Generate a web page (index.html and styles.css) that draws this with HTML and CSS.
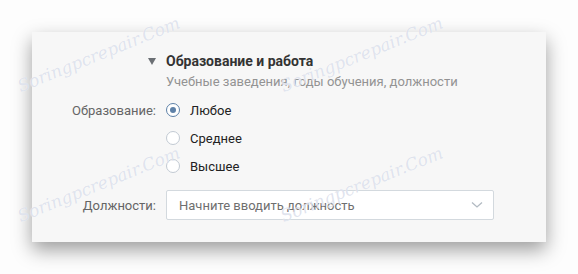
FILE: index.html
```html
<!DOCTYPE html>
<html>
<head>
    <title>Образование и работа</title>
    <link rel="stylesheet" href="styles.css">
</head>
<body>
    <div class="card">
        <div class="section-head">
            <span class="toggle"></span>
            <div>
                <div class="section-title">Образование и работа</div>
                <div class="section-sub">Учебные заведения, годы обучения, должности</div>
            </div>
        </div>

        <div class="form-row">
            <div class="row-label">Образование:</div>
            <label class="radio checked"><span class="radio-dot"></span>Любое</label>
        </div>
        <div class="form-row">
            <div class="row-label"></div>
            <label class="radio"><span class="radio-dot"></span>Среднее</label>
        </div>
        <div class="form-row">
            <div class="row-label"></div>
            <label class="radio"><span class="radio-dot"></span>Высшее</label>
        </div>

        <div class="form-row select-row">
            <div class="row-label">Должности:</div>
            <div class="select">
                <span class="placeholder">Начните вводить должность</span>
                <svg class="chevron" width="12" height="8" viewBox="0 0 12 8">
                    <path d="M1 1.5 L6 6 L11 1.5" fill="none" stroke="#b2bac2" stroke-width="1.3"/>
                </svg>
            </div>
        </div>
    </div>

    <div class="mark mark-1">Soringpcrepair.Com</div>
    <div class="mark mark-2">Soringpcrepair.Com</div>
    <div class="mark mark-3">Soringpcrepair.Com</div>
    <div class="mark mark-4">Soringpcrepair.Com</div>
</body>
</html>
```

FILE: styles.css
```css
body {
    margin: 0;
    background-color: #fdfdfd;
    font-family: Roboto, "Liberation Sans", Arial, sans-serif;
    font-size: 13px;
    position: relative;
    height: 274px;
    overflow: hidden;
}

.card {
    margin: 32px 0 0 32px;
    width: 514px;
    height: 210px;
    box-sizing: border-box;
    background-color: #f7f7f7;
    box-shadow: 0 8px 18px rgba(0, 0, 0, 0.38);
    padding-top: 20px;
}

.section-head {
    display: flex;
    align-items: flex-start;
    padding-left: 116px;
}

.toggle {
    width: 0;
    height: 0;
    border-left: 4px solid transparent;
    border-right: 4px solid transparent;
    border-top: 7px solid #6b6f74;
    margin-top: 6px;
    margin-right: 10px;
}

.section-title {
    font-weight: bold;
    color: #333;
    line-height: 18px;
    font-size: 14px;
}

.section-sub {
    color: #939393;
    line-height: 18px;
    margin-top: 3px;
}

.section-head + .form-row {
    margin-top: 5px;
}

.form-row {
    display: flex;
    align-items: center;
    height: 28px;
}

.row-label {
    width: 124px;
    text-align: right;
    color: #656565;
    margin-right: 10px;
}

.radio {
    display: flex;
    align-items: center;
    color: #222;
}

.radio-dot {
    width: 12px;
    height: 12px;
    border: 1px solid #c2cad3;
    border-radius: 50%;
    background-color: #fff;
    margin-right: 10px;
    position: relative;
}

.radio.checked .radio-dot {
    border-color: #5e81a8;
}

.radio.checked .radio-dot::after {
    content: "";
    position: absolute;
    left: 3px;
    top: 3px;
    width: 6px;
    height: 6px;
    border-radius: 50%;
    background-color: #5e81a8;
}

.select-row {
    height: 30px;
    margin-top: 10px;
}

.select {
    width: 328px;
    height: 30px;
    box-sizing: border-box;
    border: 1px solid #d3d9de;
    border-radius: 2px;
    background-color: #fff;
    display: flex;
    align-items: center;
    justify-content: space-between;
    padding: 0 10px 0 12px;
}

.placeholder {
    color: #6f6f6f;
}

.mark {
    position: absolute;
    font-family: "DejaVu Serif", serif;
    font-style: italic;
    font-size: 17px;
    line-height: 20px;
    color: rgba(175, 185, 212, 0.4);
    text-shadow: 0 0 1px #fff;
    transform: rotate(-22deg);
    transform-origin: left bottom;
    white-space: nowrap;
    pointer-events: none;
}

.mark-1 { left: 22px; top: 76px; }
.mark-2 { left: 285px; top: 76px; }
.mark-3 { left: 22px; top: 206px; }
.mark-4 { left: 285px; top: 206px; }
```
